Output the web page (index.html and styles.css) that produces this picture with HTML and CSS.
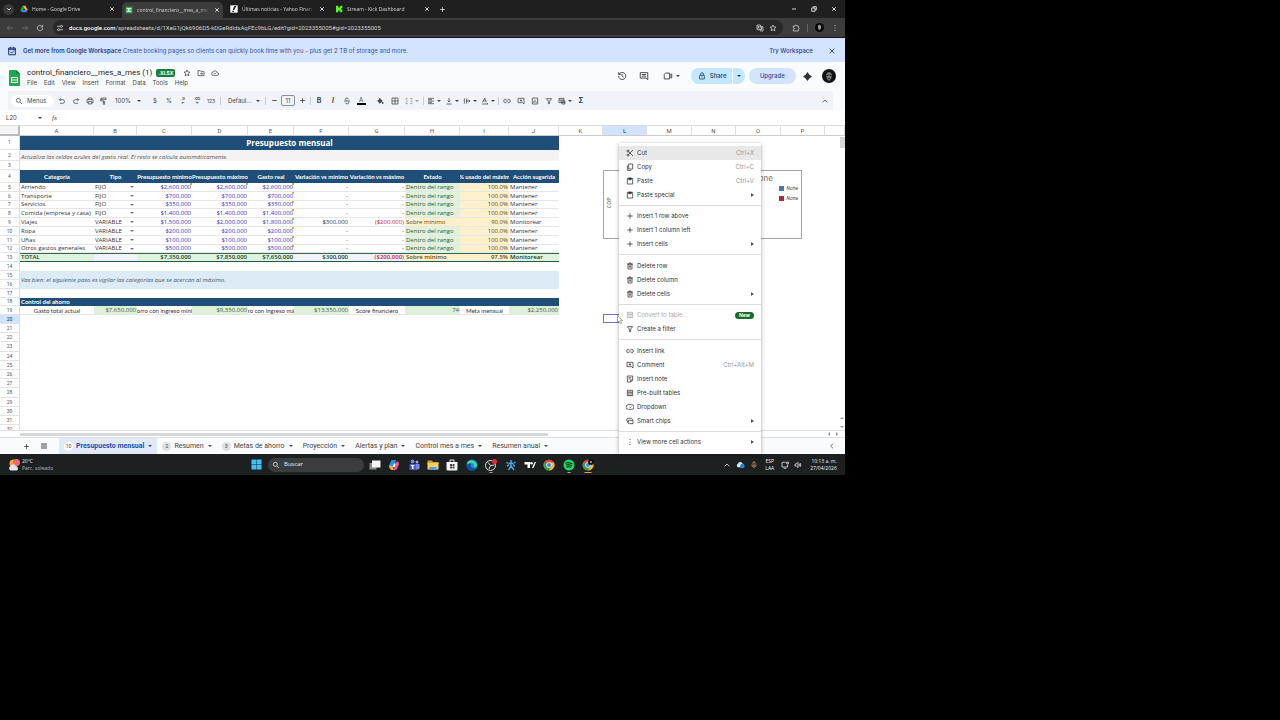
FILE: index.html
```html
<!DOCTYPE html>
<html lang="es">
<head>
    <meta charset="UTF-8">
    <meta name="viewport" content="width=device-width, initial-scale=1.0">
    <title>control_financiero__mes_a_mes (1)</title>
    <link rel="stylesheet" href="styles.css">
</head>
<body>

<!-- Icon set -->
<svg class="defs" aria-hidden="true">
    <symbol id="i-x" viewBox="0 0 24 24"><path d="M5 5l14 14M19 5L5 19"/></symbol>
    <symbol id="i-plus" viewBox="0 0 24 24"><path d="M12 4v16M4 12h16"/></symbol>
    <symbol id="i-minus" viewBox="0 0 24 24"><path d="M4 12h16"/></symbol>
    <symbol id="i-down" viewBox="0 0 24 24"><path d="M5 9l7 7 7-7"/></symbol>
    <symbol id="i-up" viewBox="0 0 24 24"><path d="M5 16l7-7 7 7"/></symbol>
    <symbol id="i-left" viewBox="0 0 24 24"><path d="M15 5l-7 7 7 7"/></symbol>
    <symbol id="i-back" viewBox="0 0 24 24"><path d="M21 12H4M11 5l-7 7 7 7"/></symbol>
    <symbol id="i-fwd" viewBox="0 0 24 24"><path d="M3 12h17M13 5l7 7-7 7"/></symbol>
    <symbol id="i-reload" viewBox="0 0 24 24"><path d="M20 12a8 8 0 1 1-3-6.200M20 3v6h-6"/></symbol>
    <symbol id="i-tune" viewBox="0 0 24 24"><path d="M3 7h9M19 7h2M12 17h9M3 17h2"/><circle cx="16" cy="7" r="3"/><circle cx="8" cy="17" r="3"/></symbol>
    <symbol id="i-star" viewBox="0 0 24 24"><path d="M12 3l2.700 6 6.300.6-4.800 4.300 1.500 6.600L12 17l-5.700 3.500 1.500-6.600L3 9.600l6.300-.6z"/></symbol>
    <symbol id="i-translate" viewBox="0 0 24 24"><path d="M3 3h10l4 14H3zM12 8h9v13h-8l-1-4M5 8h6M8 6v2c0 3-1 5-3 6M6 10l4 4M14 12h5M17 12c0 3-1 4-3 6"/></symbol>
    <symbol id="i-puzzle" viewBox="0 0 24 24"><path d="M4 6h5c0-4 5-4 5 0h5v5c3 0 3 5 0 5v5H4v-5c4 0 4-5 0-5z"/></symbol>
    <symbol id="i-more" viewBox="0 0 24 24"><path d="M12 3v3M12 10.500v3M12 18v3"/></symbol>
    <symbol id="i-cal" viewBox="0 0 24 24"><path d="M4 5h16v16H4zM4 8h16M8 2v4M16 2v4M8 14l3 3 6-6"/></symbol>
    <symbol id="i-folder" viewBox="0 0 24 24"><path d="M3 5h7l2 3h9v12H3zM9 14h8M14 11l3 3-3 3"/></symbol>
    <symbol id="i-cloud" viewBox="0 0 24 24"><path d="M7 19a5 5 0 0 1-.5-10 6.500 6.500 0 0 1 12 2A4 4 0 0 1 19 19zM9 13l2 2 4-4"/></symbol>
    <symbol id="i-history" viewBox="0 0 24 24"><path d="M4 12a8.500 8.500 0 1 0 3-6.500L4 8M4 3v5h5M12 7v5l4 3"/></symbol>
    <symbol id="i-chat" viewBox="0 0 24 24"><path d="M3 4h18v17l-4-4H3zM7 8.500h10M7 12.500h10"/></symbol>
    <symbol id="i-video" viewBox="0 0 24 24"><path d="M6 5h10v14H3V8zM16 11l5-4v10l-5-4"/></symbol>
    <symbol id="i-lock" viewBox="0 0 24 24"><path d="M5 10h14v11H5zM8 10V6a4 4 0 0 1 8 0v4M12 14v3"/></symbol>
    <symbol id="i-search" viewBox="0 0 24 24"><circle cx="10" cy="10" r="6"/><path d="M15 15l6 6"/></symbol>
    <symbol id="i-undo" viewBox="0 0 24 24"><path d="M8 4L4 8l4 4M4 8h10a5 5 0 0 1 0 11H6"/></symbol>
    <symbol id="i-redo" viewBox="0 0 24 24"><path d="M16 4l4 4-4 4M20 8H10a5 5 0 0 0 0 11h8"/></symbol>
    <symbol id="i-print" viewBox="0 0 24 24"><path d="M7 8V3h10v5M7 17H3V8h18v9h-4M7 14h10v7H7z"/></symbol>
    <symbol id="i-paint" viewBox="0 0 24 24"><path d="M5 3h13v5H5zM5 5H2v7h10v3M10 15h4v7h-4z"/></symbol>
    <symbol id="i-strike" viewBox="0 0 24 24"><path d="M3 12h18M17 7c-1-5-10-5-10 0 0 2 2 3 5 5M7 17c1 5 10 5 10 0 0-2-1-3-2-3"/></symbol>
    <symbol id="i-fill" viewBox="0 0 24 24"><path fill="currentColor" d="M5 12l7-7 7 7-7 7zM20 15l2 4h-4z"/><path d="M8 2l5 5"/></symbol>
    <symbol id="i-borders" viewBox="0 0 24 24"><path d="M3 3h18v18H3zM12 3v18M3 12h18"/></symbol>
    <symbol id="i-merge" viewBox="0 0 24 24"><path d="M9 4H3v5M3 15v5h6M15 4h6v5M21 15v5h-6M3 12h6M21 12h-6"/></symbol>
    <symbol id="i-align" viewBox="0 0 24 24"><path d="M3 4h18M3 8h12M3 12h18M3 16h12M3 20h18"/></symbol>
    <symbol id="i-valign" viewBox="0 0 24 24"><path d="M4 21h16M12 3v12M8 11l4 4 4-4"/></symbol>
    <symbol id="i-wrap" viewBox="0 0 24 24"><path d="M4 4v16M11 4v16M8 12h13M17 8l4 4-4 4"/></symbol>
    <symbol id="i-rotate" viewBox="0 0 24 24"><path d="M5 16l6-13 5 11M7 12h8M3 21h18M17 18l4 3"/></symbol>
    <symbol id="i-link" viewBox="0 0 24 24"><path d="M10 7H7a5 5 0 0 0 0 10h3M14 7h3a5 5 0 0 1 0 10h-3M8 12h8"/></symbol>
    <symbol id="i-addcomment" viewBox="0 0 24 24"><path d="M3 4h18v17l-4-4H3zM12 7v7M8.500 10.500h7"/></symbol>
    <symbol id="i-chart" viewBox="0 0 24 24"><path d="M4 3h16v18H4zM8 17v-5M12 17V8M16 17v-3"/></symbol>
    <symbol id="i-filter" viewBox="0 0 24 24"><path d="M4 5h16l-6 7v8h-4v-8z"/></symbol>
    <symbol id="i-table" viewBox="0 0 24 24"><path d="M4 4h16v16H4zM4 9h16M9 9v11M15 9v11"/></symbol>
    <symbol id="i-views" viewBox="0 0 24 24"><path d="M3 4h15v13H3zM3 9h15M9 9v8M12 12h9v9h-9zM12 16h9"/></symbol>
    <symbol id="i-menu" viewBox="0 0 24 24"><path d="M3 6h18M3 12h18M3 18h18"/></symbol>
    <symbol id="i-cut" viewBox="0 0 24 24"><circle cx="6" cy="6" r="3"/><circle cx="6" cy="18" r="3"/><path d="M8 8l13 13M8 16L21 3"/></symbol>
    <symbol id="i-copy" viewBox="0 0 24 24"><path d="M8 3h12v15H8zM4 7v15h12"/></symbol>
    <symbol id="i-paste" viewBox="0 0 24 24"><path d="M4 4h16v17H4z"/><path fill="currentColor" d="M8 3h8v5H8z"/></symbol>
    <symbol id="i-trash" viewBox="0 0 24 24"><path d="M6 6h12v15H6zM3 6h18M9 3h6M10 10v7M14 10v7"/></symbol>
    <symbol id="i-note" viewBox="0 0 24 24"><path d="M4 3h16v12l-6 6H4zM14 21v-6h6M8 8h8M8 12h6"/></symbol>
    <symbol id="i-dropdown" viewBox="0 0 24 24"><path d="M7 5h10a7 7 0 0 1 0 14H7A7 7 0 0 1 7 5zM10 11l3 3 3-3"/></symbol>
    <symbol id="i-chips" viewBox="0 0 24 24"><path d="M9 14H7A5 5 0 0 1 7 4h9a5 5 0 0 1 4 4M10 10h11v10H10a5 5 0 0 1 0-10z"/></symbol>
    <symbol id="i-mic" viewBox="0 0 24 24"><path d="M9 3h6v11H9zM5 11a7 7 0 0 0 14 0M12 18v4"/></symbol>
    <symbol id="i-monitor" viewBox="0 0 24 24"><path d="M14 4H3v14h17v-6M8 22h8M17 3h5v6h-5z"/></symbol>
    <symbol id="i-sound" viewBox="0 0 24 24"><path d="M3 9v6h4l5 5V4L7 9zM15 9q3 3 0 6M18 6q5 6 0 12"/></symbol>
</svg>

<div class="screen">

    <!-- Browser tabs -->
    <div class="tab-strip">
        <button class="tab-search" aria-label="Search tabs"><svg class="icon xs"><use href="#i-down"/></svg></button>
        <div class="tab">
            <svg class="favicon" viewBox="0 0 24 24"><path fill="#f9bc15" d="M8 2h8l7 13h-7z"/><path fill="#1fa463" d="M8 2l4 7-7 13-4-7z"/><path fill="#4285f4" d="M9 15h14l-4 7H5z"/></svg>
            <span class="tab-title">Home - Google Drive</span>
            <svg class="icon xs"><use href="#i-x"/></svg>
        </div>
        <div class="tab active">
            <svg class="favicon" viewBox="0 0 24 24"><path fill="#34a853" d="M2 2h20v20H2z"/><path fill="#fff" d="M5 7h14v3H5zM5 14h14v3H5zM10 7h3v10h-3z"/></svg>
            <span class="tab-title">control_financiero__mes_a_me</span>
            <svg class="icon xs"><use href="#i-x"/></svg>
        </div>
        <div class="tab">
            <svg class="favicon" viewBox="0 0 24 24"><path fill="#fff" d="M1 1h22v22H1z"/><path fill="#222" d="M13 3h6l-6 12H8zM7 17h5v4H7z"/></svg>
            <span class="tab-title">Últimas noticias - Yahoo Finan</span>
            <svg class="icon xs"><use href="#i-x"/></svg>
        </div>
        <div class="tab">
            <svg class="favicon" viewBox="0 0 24 24"><path fill="#53fc18" d="M3 2h7v6h3V5h3V2h6v7h-3v5h3v8h-6v-3h-3v-3h-3v6H3z"/></svg>
            <span class="tab-title">Stream - Kick Dashboard</span>
            <svg class="icon xs"><use href="#i-x"/></svg>
        </div>
        <button class="new-tab" aria-label="New tab"><svg class="icon sm"><use href="#i-plus"/></svg></button>
        <div class="window-buttons">
            <svg class="icon xs"><use href="#i-minus"/></svg>
            <svg class="icon xs" viewBox="0 0 24 24"><path d="M3 8h13v13H3zM8 8V3h13v13h-5"/></svg>
            <svg class="icon xs"><use href="#i-x"/></svg>
        </div>
    </div>

    <!-- Address bar -->
    <div class="address-bar">
        <div class="nav-buttons">
            <svg class="icon dim"><use href="#i-back"/></svg>
            <svg class="icon dim"><use href="#i-fwd"/></svg>
            <svg class="icon"><use href="#i-reload"/></svg>
        </div>
        <div class="url-box">
            <svg class="icon"><use href="#i-tune"/></svg>
            <span class="url"><b>docs.google.com</b>/spreadsheets/d/1XeG1jQk6906D5-kDGeRdldsAqFEc9bLG/edit?gid=2023355005#gid=2023355005</span>
            <svg class="icon"><use href="#i-translate"/></svg>
            <svg class="icon"><use href="#i-star"/></svg>
        </div>
        <div class="browser-actions">
            <svg class="icon"><use href="#i-puzzle"/></svg>
            <span class="bar-sep"></span>
            <svg class="avatar small" viewBox="0 0 24 24"><circle cx="12" cy="12" r="12" fill="#080808"/><path fill="#999" d="M8 7q4-5 8 0v6l-2 5h-4l-2-5z"/></svg>
            <svg class="icon"><use href="#i-more"/></svg>
        </div>
    </div>

    <!-- Workspace banner -->
    <div class="banner">
        <svg class="icon lg"><use href="#i-cal"/></svg>
        <p><b>Get more from Google Workspace</b> Create booking pages so clients can quickly book time with you - plus get 2 TB of storage and more.</p>
        <a href="#">Try Workspace</a>
        <svg class="icon"><use href="#i-x"/></svg>
    </div>

    <!-- Document header -->
    <header class="doc-header">
        <svg class="sheets-logo" viewBox="0 0 22 32"><path fill="#1fa84f" d="M2 0h13l7 8v22q0 2-2 2H2q-2 0-2-2V2q0-2 2-2z"/><path fill="#0d7c37" d="M15 0l7 8h-7z"/><path fill="#fff" d="M4 14h14v12H4z"/><path fill="#1fa84f" d="M6 16h10v3H6zM6 21h10v3H6z"/></svg>
        <div class="doc-info">
            <div class="doc-title">
                <h1>control_financiero__mes_a_mes (1)</h1>
                <span class="xlsx">.XLSX</span>
                <svg class="icon"><use href="#i-star"/></svg>
                <svg class="icon"><use href="#i-folder"/></svg>
                <svg class="icon"><use href="#i-cloud"/></svg>
            </div>
            <nav class="doc-menu">
                <a href="#">File</a><a href="#">Edit</a><a href="#">View</a><a href="#">Insert</a><a href="#">Format</a><a href="#">Data</a><a href="#">Tools</a><a href="#">Help</a>
            </nav>
        </div>
        <div class="doc-actions">
            <svg class="icon lg"><use href="#i-history"/></svg>
            <svg class="icon lg"><use href="#i-chat"/></svg>
            <span class="meet"><svg class="icon lg"><use href="#i-video"/></svg><i class="caret"></i></span>
            <div class="share">
                <button class="share-main"><svg class="icon"><use href="#i-lock"/></svg>Share</button>
                <button class="share-more" aria-label="Share options"><i class="caret"></i></button>
            </div>
            <button class="upgrade">Upgrade</button>
            <svg class="spark" viewBox="0 0 24 24"><path d="M12 0q4 8 12 12-8 4-12 12-4-8-12-12 8-4 12-12z"/></svg>
            <svg class="avatar" viewBox="0 0 24 24"><circle cx="12" cy="12" r="12" fill="#111"/><path fill="#777" d="M7 9q5-8 10 0l-1 7-4 5-4-5z"/><path fill="#222" d="M8 10h3v2H8zM13 10h3v2h-3zM10 16h4v1h-4z"/></svg>
        </div>
    </header>

    <!-- Toolbar -->
    <div class="toolbar">
        <label class="menus"><svg class="icon"><use href="#i-search"/></svg><input type="text" placeholder="Menus" aria-label="Menus"></label>
        <button aria-label="Undo"><svg class="icon"><use href="#i-undo"/></svg></button>
        <button aria-label="Redo"><svg class="icon"><use href="#i-redo"/></svg></button>
        <button aria-label="Print"><svg class="icon"><use href="#i-print"/></svg></button>
        <button aria-label="Paint format"><svg class="icon"><use href="#i-paint"/></svg></button>
        <label class="drop zoom"><select aria-label="Zoom"><option>100%</option></select><i class="caret"></i></label>
        <button>$</button>
        <button>%</button>
        <button class="dec">.0<br>←</button>
        <button class="dec">.00<br>→</button>
        <button class="digits">123</button>
        <span class="tool-sep after-format"></span>
        <label class="drop font"><select aria-label="Font"><option>Defaul...</option></select><i class="caret"></i></label>
        <span class="tool-sep"></span>
        <button aria-label="Decrease font size"><svg class="icon sm"><use href="#i-minus"/></svg></button>
        <input class="font-size" type="text" value="11" aria-label="Font size">
        <button aria-label="Increase font size"><svg class="icon sm"><use href="#i-plus"/></svg></button>
        <span class="tool-sep"></span>
        <button class="letter"><b>B</b></button>
        <button class="letter"><b><em>I</em></b></button>
        <button aria-label="Strikethrough"><svg class="icon"><use href="#i-strike"/></svg></button>
        <button><span class="text-color">A</span></button>
        <button class="fill" aria-label="Fill color"><svg class="icon"><use href="#i-fill"/></svg></button>
        <button aria-label="Borders"><svg class="icon"><use href="#i-borders"/></svg></button>
        <button class="with-caret faded" aria-label="Merge cells"><svg class="icon"><use href="#i-merge"/></svg><i class="caret"></i></button>
        <span class="tool-sep"></span>
        <button class="with-caret" aria-label="Horizontal align"><svg class="icon"><use href="#i-align"/></svg><i class="caret"></i></button>
        <button class="with-caret" aria-label="Vertical align"><svg class="icon"><use href="#i-valign"/></svg><i class="caret"></i></button>
        <button class="with-caret" aria-label="Text wrapping"><svg class="icon"><use href="#i-wrap"/></svg><i class="caret"></i></button>
        <button class="with-caret" aria-label="Text rotation"><svg class="icon"><use href="#i-rotate"/></svg><i class="caret"></i></button>
        <span class="tool-sep"></span>
        <button aria-label="Insert link"><svg class="icon"><use href="#i-link"/></svg></button>
        <button aria-label="Insert comment"><svg class="icon"><use href="#i-addcomment"/></svg></button>
        <button aria-label="Insert chart"><svg class="icon"><use href="#i-chart"/></svg></button>
        <button aria-label="Create a filter"><svg class="icon"><use href="#i-filter"/></svg></button>
        <button class="with-caret" aria-label="Table views"><svg class="icon"><use href="#i-views"/></svg><i class="caret"></i></button>
        <button class="letter"><b>Σ</b></button>
        <button class="collapse" aria-label="Hide the menus"><svg class="icon"><use href="#i-up"/></svg></button>
    </div>

    <!-- Formula bar -->
    <div class="formula-bar">
        <input class="name-box" type="text" value="L20" aria-label="Name box"><i class="caret"></i>
        <em class="fx">fx</em>
        <input class="formula" type="text" aria-label="Formula">
    </div>

    <!-- Sheet -->
    <main class="sheet">
        <table class="grid">
            <colgroup>
                <col class="c-num"><col class="c-a"><col class="c-b"><col class="c-c"><col class="c-d"><col class="c-e"><col class="c-c"><col class="c-d"><col class="c-c"><col class="c-i"><col class="c-j"><col class="c-k"><col class="c-k"><col class="c-m"><col class="c-k"><col class="c-m"><col class="c-k"><col>
            </colgroup>
            <thead>
                <tr><th class="corner"></th><th>A</th><th>B</th><th>C</th><th>D</th><th>E</th><th>F</th><th>G</th><th>H</th><th>I</th><th>J</th><th>K</th><th class="sel">L</th><th>M</th><th>N</th><th>O</th><th>P</th><th></th></tr>
            </thead>
            <tbody>
                <tr class="title-row"><th>1</th><td colspan="10">Presupuesto mensual</td></tr>
                <tr class="note-row"><th>2</th><td colspan="10">Actualiza las celdas azules del gasto real. El resto se calcula automáticamente.</td></tr>
                <tr><th>3</th></tr>
                <tr class="head-row"><th>4</th><td><div>Categoría</div></td><td><div>Tipo</div></td><td><div>Presupuesto mínimo</div></td><td><div>Presupuesto máximo</div></td><td><div>Gasto real</div></td><td><div>Variación vs mínimo</div></td><td><div>Variación vs máximo</div></td><td><div>Estado</div></td><td><div>% usado del máxim</div></td><td><div>Acción sugerida</div></td></tr>
                <tr class="item"><th>5</th><td>Arriendo</td><td>FIJO<i class="caret"></i></td><td class="money tick">$2,600,000</td><td class="money tick">$2,600,000</td><td class="money tick">$2,600,000</td><td class="num">-</td><td class="num">-</td><td class="ok">Dentro del rango</td><td class="used">100.0%</td><td>Mantener</td></tr>
                <tr class="item"><th>6</th><td>Transporte</td><td>FIJO<i class="caret"></i></td><td class="money">$700,000</td><td class="money">$700,000</td><td class="money tick">$700,000</td><td class="num">-</td><td class="num">-</td><td class="ok">Dentro del rango</td><td class="used">100.0%</td><td>Mantener</td></tr>
                <tr class="item tight"><th>7</th><td>Servicios</td><td>FIJO<i class="caret"></i></td><td class="money">$350,000</td><td class="money">$350,000</td><td class="money tick">$350,000</td><td class="num">-</td><td class="num">-</td><td class="ok">Dentro del rango</td><td class="used">100.0%</td><td>Mantener</td></tr>
                <tr class="item"><th>8</th><td>Comida (empresa y casa)</td><td>FIJO<i class="caret"></i></td><td class="money">$1,400,000</td><td class="money">$1,400,000</td><td class="money tick">$1,400,000</td><td class="num">-</td><td class="num">-</td><td class="ok">Dentro del rango</td><td class="used">100.0%</td><td>Mantener</td></tr>
                <tr class="item"><th>9</th><td>Viajes</td><td>VARIABLE<i class="caret"></i></td><td class="money">$1,500,000</td><td class="money">$2,000,000</td><td class="money tick">$1,800,000</td><td class="num">$300,000</td><td class="num neg">($200,000)</td><td class="warn">Sobre mínimo</td><td class="used">90.0%</td><td>Monitorear</td></tr>
                <tr class="item"><th>10</th><td>Ropa</td><td>VARIABLE<i class="caret"></i></td><td class="money">$200,000</td><td class="money">$200,000</td><td class="money tick">$200,000</td><td class="num">-</td><td class="num">-</td><td class="ok">Dentro del rango</td><td class="used">100.0%</td><td>Mantener</td></tr>
                <tr class="item"><th>11</th><td>Uñas</td><td>VARIABLE<i class="caret"></i></td><td class="money">$100,000</td><td class="money">$100,000</td><td class="money tick">$100,000</td><td class="num">-</td><td class="num">-</td><td class="ok">Dentro del rango</td><td class="used">100.0%</td><td>Mantener</td></tr>
                <tr class="item tight"><th>12</th><td>Otros gastos generales</td><td>VARIABLE<i class="caret"></i></td><td class="money">$500,000</td><td class="money">$500,000</td><td class="money tick">$500,000</td><td class="num">-</td><td class="num">-</td><td class="ok">Dentro del rango</td><td class="used">100.0%</td><td>Mantener</td></tr>
                <tr class="total"><th>13</th><td>TOTAL</td><td class="plain"></td><td class="num">$7,350,000</td><td class="num">$7,850,000</td><td class="num">$7,650,000</td><td class="num plain">$300,000</td><td class="num plain neg">($200,000)</td><td class="warn">Sobre mínimo</td><td class="used">97.5%</td><td>Monitorear</td></tr>
                <tr><th>14</th></tr>
                <tr><th>15</th><td class="advice" colspan="10" rowspan="2">Vas bien: el siguiente paso es vigilar las categorías que se acercan al máximo.</td></tr>
                <tr><th>16</th></tr>
                <tr><th>17</th></tr>
                <tr class="section tight"><th>18</th><td colspan="10">Control del ahorro</td></tr>
                <tr class="savings"><th>19</th><td><div>Gasto total actual</div></td><td class="good">$7,650,000</td><td><div>orro con ingreso míni</div></td><td class="good">$9,350,000</td><td><div>ro con ingreso má</div></td><td class="good">$13,350,000</td><td><div>Score financiero</div></td><td class="good">74</td><td><div>Meta mensual</div></td><td class="good">$2,250,000</td></tr>
                <tr><th class="sel">20</th></tr>
                <tr><th>21</th></tr>
                <tr><th>22</th></tr>
                <tr class="loose"><th>23</th></tr>
                <tr><th>24</th></tr>
                <tr><th>25</th></tr>
                <tr><th>26</th></tr>
                <tr><th>27</th></tr>
                <tr class="loose"><th>28</th></tr>
                <tr><th>29</th></tr>
                <tr><th>30</th></tr>
                <tr><th>31</th></tr>
                <tr><th>32</th></tr>
            </tbody>
        </table>
        <span class="v-thumb"></span>
        <span class="v-arrows"><i></i><i></i></span>

        <div class="chart">
            <span class="chart-title">None</span>
            <span class="axis">COP</span>
            <ul class="legend">
                <li><i class="blue"></i>None</li>
                <li><i class="red"></i>None</li>
            </ul>
        </div>
        <span class="cell-cursor"></span>
    </main>

    <div class="h-scroll"><span class="h-thumb"></span><span class="h-arrows"><i></i><i></i></span></div>

    <!-- Sheet tabs -->
    <div class="sheet-tabs">
        <button class="add-sheet" aria-label="Add sheet"><svg class="icon sm"><use href="#i-plus"/></svg></button>
        <button class="all-sheets" aria-label="All sheets"><svg class="icon"><use href="#i-menu"/></svg></button>
        <button class="sheet-tab current"><span class="count">10</span>Presupuesto mensual<i class="caret"></i></button>
        <button class="sheet-tab"><span class="count">2</span>Resumen<i class="caret"></i></button>
        <button class="sheet-tab"><span class="count">3</span>Metas de ahorro<i class="caret"></i></button>
        <button class="sheet-tab">Proyección<i class="caret"></i></button>
        <button class="sheet-tab">Alertas y plan<i class="caret"></i></button>
        <button class="sheet-tab">Control mes a mes<i class="caret"></i></button>
        <button class="sheet-tab">Resumen anual<i class="caret"></i></button>
        <svg class="icon side-toggle"><use href="#i-left"/></svg>
    </div>

    <!-- Windows taskbar -->
    <footer class="taskbar">
        <div class="weather">
            <svg viewBox="0 0 24 24"><circle cx="11" cy="9" r="8" fill="#f3a33b"/><circle cx="17" cy="7" r="7" fill="#ec6a6a"/><path fill="#dfe5f2" d="M5 23a5 5 0 0 1 0-9 6 6 0 0 1 11 0 5 5 0 0 1 2 9z"/></svg>
            <p>20°C<br><span>Parc. soleado</span></p>
        </div>
        <svg class="start" viewBox="0 0 24 24"><path fill="#3fc1f5" d="M1 1h10.500v10.500H1zM12.500 1H23v10.500H12.500zM1 12.500h10.500V23H1zM12.500 12.500H23V23H12.500z"/></svg>
        <label class="task-search"><svg class="icon"><use href="#i-search"/></svg><input type="text" placeholder="Buscar" aria-label="Buscar"></label>
        <div class="apps">
            <svg viewBox="0 0 24 24"><path fill="#8a8a8a" d="M1 8h14v13H1z"/><path fill="#f4f4f4" d="M6 3h17v14H6z"/></svg>
            <svg viewBox="0 0 24 24"><path fill="#2b8fe8" d="M7 2h9l-5 17H5q-4-1-3-6z"/><path fill="#f0b429" d="M2 13q3 0 6 1l4 8H8q-4 0-6-9z"/><path fill="#e7568c" d="M17 5h2q4 1 3 6l-4 9q-2 3-8 2l3-7z"/><path fill="#fff" d="M12 9h4l-3 7H9z"/></svg>
            <svg viewBox="0 0 24 24"><circle cx="9" cy="5" r="4" fill="#7b83eb"/><circle cx="18" cy="6" r="3" fill="#9ea2f5"/><path fill="#4e5bd0" d="M3 10h13v12H3z"/><path fill="#7b83eb" d="M16 10h7v9q-3 3-7 2z"/><path fill="#fff" d="M6 12h7v2h-2v6H8v-6H6z"/></svg>
            <svg viewBox="0 0 24 24"><path fill="#dc9b20" d="M1 3h9l2 3h11v4H1z"/><path fill="#fbd256" d="M1 8h22v13H1z"/><path fill="#4ba0e8" d="M5 16h14v6H5z"/></svg>
            <svg viewBox="0 0 24 24"><path fill="#f5f5f5" d="M1 6h22v14q0 3-3 3H4q-3 0-3-3z"/><path d="M8 6V2h8v4" fill="none" stroke="#eee" stroke-width="2"/><path fill="#444" d="M8 10h4v4H8zM13 10h4v4h-4zM8 15h4v4H8zM13 15h4v4h-4z"/></svg>
            <svg viewBox="0 0 24 24"><circle cx="12" cy="12" r="11" fill="#1687d9"/><path fill="#48d5a0" d="M3 6q9-9 19 4 1 7-7 6 3-8-4-8-6 0-9 4z"/><path fill="#0b4ea5" d="M1 13q3-5 9-4-4 9 9 10-7 7-14 1z"/></svg>
            <svg class="running" viewBox="0 0 24 24"><circle cx="11" cy="13" r="10" fill="#222" stroke="#ddd" stroke-width="2"/><path d="M11 13L6 7M11 13l8-1M11 13l-3 7" stroke="#ddd" stroke-width="2"/><circle cx="19" cy="5" r="5" fill="#e0283c"/><path fill="#aaa" d="M9 26h6v2H9z"/></svg>
            <svg viewBox="0 0 24 24"><path d="M12 2v6M7 10l5-3 5 3M12 8v6l-5 8M12 14l6 8M4 14l4-2M20 14l-4-2M3 7l3 1M21 6l-3 2" fill="none" stroke="#4aa3e8" stroke-width="3"/></svg>
            <svg viewBox="0 0 24 24"><path fill="#fff" d="M1 6h11v12H7v-7H1zM16 18l5-12h3l-5 12z"/><circle cx="15" cy="8.500" r="2.500" fill="#fff"/></svg>
            <svg viewBox="0 0 24 24"><circle cx="12" cy="12" r="11" fill="#e94435"/><path fill="#34a353" d="M12 12L2.500 6.500A11 11 0 0 0 12 23l5-8z"/><path fill="#fbc116" d="M12 7h9.800A11 11 0 0 1 12 23l5-8z"/><circle cx="12" cy="12" r="5" fill="#4285f4" stroke="#fff" stroke-width="1.500"/></svg>
            <svg class="running" viewBox="0 0 24 24"><circle cx="12" cy="12" r="11" fill="#1ed760"/><path d="M5 8q8-2 14 2M6 12q7-2 12 2M7 16q5-2 9 1" fill="none" stroke="#111" stroke-width="2"/><path fill="#aaa" d="M9 26h6v2H9z"/></svg>
            <svg class="running" viewBox="0 0 24 24"><circle cx="12" cy="12" r="11" fill="#e94435"/><path fill="#34a353" d="M12 12L2.500 6.500A11 11 0 0 0 12 23l5-8z"/><path fill="#fbc116" d="M12 7h9.800A11 11 0 0 1 12 23l5-8z"/><circle cx="12" cy="12" r="5" fill="#4285f4" stroke="#fff" stroke-width="1.500"/><circle cx="18" cy="6" r="6" fill="#111"/><circle cx="18" cy="6" r="2" fill="#aaa"/><path fill="#d9a06a" d="M5 26h14v2H5z"/></svg>
        </div>
        <div class="tray">
            <svg class="icon"><use href="#i-up"/></svg>
            <svg class="onedrive" viewBox="0 0 24 24"><path fill="#dce9f7" d="M5 19a5 5 0 0 1 0-9 7 7 0 0 1 13 0v9z"/><circle cx="17" cy="16" r="6" fill="#2185d8"/></svg>
            <svg class="icon mic"><use href="#i-mic"/></svg>
            <p class="lang">ESP<br>LAA</p>
            <svg class="icon"><use href="#i-monitor"/></svg>
            <svg class="icon"><use href="#i-sound"/></svg>
            <p class="clock">10:13 a. m.<br>27/04/2026</p>
        </div>
    </footer>

    <!-- Right-click menu -->
    <div class="context-menu">
        <button class="hover"><svg class="icon"><use href="#i-cut"/></svg>Cut<kbd>Ctrl+X</kbd></button>
        <button><svg class="icon"><use href="#i-copy"/></svg>Copy<kbd>Ctrl+C</kbd></button>
        <button><svg class="icon"><use href="#i-paste"/></svg>Paste<kbd>Ctrl+V</kbd></button>
        <button><svg class="icon"><use href="#i-paste"/></svg>Paste special<i class="arrow"></i></button>
        <hr>
        <button><svg class="icon"><use href="#i-plus"/></svg>Insert 1 row above</button>
        <button><svg class="icon"><use href="#i-plus"/></svg>Insert 1 column left</button>
        <button><svg class="icon"><use href="#i-plus"/></svg>Insert cells<i class="arrow"></i></button>
        <hr>
        <button><svg class="icon"><use href="#i-trash"/></svg>Delete row</button>
        <button><svg class="icon"><use href="#i-trash"/></svg>Delete column</button>
        <button><svg class="icon"><use href="#i-trash"/></svg>Delete cells<i class="arrow"></i></button>
        <hr>
        <button disabled><svg class="icon"><use href="#i-table"/></svg>Convert to table...<span class="new">New</span></button>
        <button><svg class="icon"><use href="#i-filter"/></svg>Create a filter</button>
        <hr>
        <button><svg class="icon"><use href="#i-link"/></svg>Insert link</button>
        <button><svg class="icon"><use href="#i-addcomment"/></svg>Comment<kbd>Ctrl+Alt+M</kbd></button>
        <button><svg class="icon"><use href="#i-note"/></svg>Insert note</button>
        <button><svg class="icon"><use href="#i-table"/></svg>Pre-built tables</button>
        <button><svg class="icon"><use href="#i-dropdown"/></svg>Dropdown</button>
        <button><svg class="icon"><use href="#i-chips"/></svg>Smart chips<i class="arrow"></i></button>
        <hr>
        <button><svg class="icon"><use href="#i-more"/></svg>View more cell actions<i class="arrow"></i></button>
    </div>
    <svg class="pointer" viewBox="0 0 12 18"><path fill="#fff" stroke="#555" d="M1 1v14l3-3 2 5 3-1-2-5h4z"/></svg>

</div>

</body>
</html>
```
FILE: styles.css
```css
* {
    box-sizing: border-box;
}
body {
    margin: 0;
    background: #000;
    font-family: Inter, Roboto, sans-serif;
    font-size: 6px;
    line-height: 8px;
    color: #444746;
}
button, input, select {
    font: inherit;
    color: inherit;
    border: none;
    background: none;
    padding: 0;
    margin: 0;
    appearance: none;
    min-width: 0;
}
a {
    color: inherit;
    text-decoration: none;
}
p, h1, ul {
    margin: 0;
    padding: 0;
}
.defs {
    display: none;
}
.screen {
    position: relative;
    width: 66%;
    background: #fff;
    overflow: hidden;
}

/* Icons */
.icon {
    width: 8px;
    height: 8px;
    flex: none;
    fill: none;
    stroke: currentColor;
    stroke-width: 2.3;
}
.icon.xs {
    width: 6px;
    height: 6px;
    stroke-width: 4;
}
.icon.sm {
    width: 7px;
    height: 7px;
    stroke-width: 3;
}
.icon.lg {
    width: 10px;
    height: 10px;
}
.caret {
    flex: none;
    border: 2px solid transparent;
    border-top-color: currentColor;
    border-bottom: none;
}

/* Browser tabs */
.tab-strip {
    display: flex;
    align-items: center;
    height: 18px;
    background: #1f1f1f;
    color: #d5d5d5;
    font-family: "Open Sans", sans-serif;
    font-size: 5px;
}
.tab-search {
    display: flex;
    align-items: center;
    justify-content: center;
    width: 11px;
    height: 11px;
    margin: 0 3px;
    border-radius: 50%;
    background: #393939;
}
.tab {
    display: flex;
    align-items: center;
    width: 105px;
    height: 15px;
    padding: 0 7px 0 3px;
    gap: 4px;
}
.tab.active {
    background: #3c3c3c;
    border-radius: 5px 5px 0 0;
    height: 16px;
    align-self: flex-end;
    width: 101px;
    margin-right: 4px;
    padding-right: 3px;
}
.favicon {
    width: 8px;
    height: 8px;
    flex: none;
}
.tab-title {
    flex: 1;
    overflow: hidden;
    white-space: nowrap;
    mask-image: linear-gradient(to right, #000 85%, transparent);
}
.new-tab {
    display: flex;
    margin-left: 2px;
}
.window-buttons {
    display: flex;
    gap: 14px;
    margin-left: auto;
    padding-right: 8px;
}

/* Address bar */
.address-bar {
    display: flex;
    align-items: center;
    height: 20px;
    background: #3c3c3c;
    border-bottom: 1px solid #141414;
    color: #d5d5d5;
    font-family: Roboto, sans-serif;
}
.nav-buttons {
    display: flex;
    gap: 7px;
    padding: 0 6px;
}
.dim {
    color: #777;
}
.url-box {
    display: flex;
    align-items: center;
    flex: 1;
    gap: 5px;
    height: 15px;
    margin-left: 3px;
    padding: 0 6px 0 3px;
    border-radius: 8px;
    background: #282828;
}
.url {
    flex: 1;
    white-space: nowrap;
}
.url b {
    font-weight: 500;
    color: #fff;
}
.browser-actions {
    display: flex;
    align-items: center;
    gap: 7px;
    padding: 0 6px 0 9px;
}
.bar-sep {
    width: 1px;
    height: 8px;
    background: #666;
}
.avatar {
    width: 14px;
    height: 14px;
}
.avatar.small {
    width: 9px;
    height: 9px;
}

/* Banner */
.banner {
    display: flex;
    align-items: center;
    height: 24px;
    padding: 1px 9px 0 7px;
    background: #d3e3fd;
    color: #33529a;
}
.banner .icon {
    color: #0b2a6b;
}
.banner p {
    flex: 1;
    margin-left: 6px;
}
.banner b, .banner a {
    font-weight: 500;
    color: #1c3f91;
}
.banner b {
    font-weight: 600;
}
.banner a {
    margin-right: 15px;
}

/* Document header */
.doc-header {
    display: flex;
    height: 29px;
    padding: 5px 9px 0;
    background: #f9fbfd;
}
.sheets-logo {
    width: 11px;
    height: 16px;
    margin: 3px 7px 0 0;
}
.doc-title {
    display: flex;
    align-items: center;
    gap: 6px;
    height: 12px;
}
.doc-title h1 {
    font-family: Roboto, sans-serif;
    font-size: 8px;
    font-weight: 400;
    line-height: 12px;
    color: #1f1f1f;
}
.xlsx {
    padding: 0 2px;
    margin: 0 2px 0 -2px;
    border-radius: 2px;
    background: #188038;
    color: #fff;
    font-size: 5px;
    font-weight: 700;
}
.doc-menu {
    display: flex;
    gap: 7px;
}
.doc-actions {
    display: flex;
    align-items: center;
    height: 18px;
    margin-left: auto;
}
.doc-actions > .icon {
    margin-right: 12px;
}
.meet {
    display: flex;
    align-items: center;
    gap: 3px;
    margin: 0 11px 0 2px;
}
.share {
    display: flex;
    height: 16px;
    margin-right: 4px;
    border-radius: 8px;
    background: #c2e7ff;
    color: #12445f;
    overflow: hidden;
}
.share-main {
    display: flex;
    align-items: center;
    gap: 4px;
    width: 41px;
    padding-left: 7px;
    font-weight: 500;
}
.share-more {
    display: flex;
    align-items: center;
    justify-content: center;
    width: 13px;
    border-left: 1px solid #f9fbfd;
}
.upgrade {
    width: 47px;
    height: 16px;
    margin-right: 7px;
    border-radius: 8px;
    background: #d3e3fd;
    color: #2b4b9a;
    font-weight: 500;
}
.spark {
    width: 9px;
    height: 9px;
    margin-right: 10px;
    fill: #333;
}

/* Toolbar */
.toolbar {
    display: flex;
    align-items: center;
    height: 19px;
    padding: 0 13px 0 11px;
    background: linear-gradient(#f0f4f9, #f0f4f9) no-repeat 8px 0 / calc(100% - 20px) 100% #f9fbfd;
}
.toolbar button {
    display: flex;
    align-items: center;
    justify-content: center;
    flex: none;
    width: 14px;
    height: 14px;
}
.toolbar .dec {
    display: block;
    font-size: 4px;
    font-weight: 600;
    line-height: 4px;
    text-align: center;
}
.toolbar .digits {
    font-size: 5px;
}
.toolbar .letter {
    font-size: 7px;
}
.toolbar .with-caret {
    width: 18px;
    gap: 2px;
}
.toolbar .faded {
    color: #999;
    width: 20px;
}
.toolbar .fill {
    margin: 0 1px 0 5px;
}
.toolbar .collapse {
    margin-left: auto;
}
.menus {
    display: flex;
    align-items: center;
    gap: 4px;
    width: 43px;
    height: 12px;
    margin-right: 1px;
    padding-left: 4px;
    border-radius: 6px;
    background: #fff;
}
.menus input {
    width: 24px;
}
.menus input::placeholder, .task-search input::placeholder {
    color: inherit;
    opacity: 1;
}
.drop {
    display: flex;
    align-items: center;
    justify-content: space-between;
    padding: 0 7px 0 4px;
}
.drop.zoom {
    width: 37px;
}
.drop.font {
    width: 42px;
    padding: 0 4px 0 6px;
}
.tool-sep {
    width: 1px;
    height: 8px;
    margin: 0 1px;
    background: #c7cacf;
}
.tool-sep.after-format {
    margin-left: 2px;
}
.font-size {
    width: 14px;
    height: 11px;
    border: 1px solid #8a8d91;
    border-radius: 2px;
    text-align: center;
}
.text-color {
    width: 9px;
    border-bottom: 2px solid #000;
    line-height: 7px;
}

/* Formula bar */
.formula-bar {
    display: flex;
    align-items: center;
    height: 15px;
    color: #444;
}
.name-box {
    width: 32px;
    margin-left: 6px;
}
.fx {
    margin-left: 10px;
    font-family: "Liberation Serif", serif;
    font-size: 7px;
}
.formula {
    flex: 1;
    margin-left: 6px;
}

/* Grid */
.sheet {
    position: relative;
    height: 306px;
    overflow: hidden;
    border-bottom: 1px solid #ddd;
}
.grid {
    width: 100%;
    table-layout: fixed;
    border-spacing: 0;
    font-family: "Open Sans", "Noto Sans", sans-serif;
    font-size: 6px;
    line-height: 7px;
    color: #333;
}
.c-num { width: 20px; }
.c-a { width: 74px; }
.c-b { width: 43px; }
.c-c { width: 55px; }
.c-d { width: 56px; }
.c-e { width: 46px; }
.c-i { width: 49px; }
.c-j { width: 50px; }
.c-k { width: 44px; }
.c-m { width: 45px; }
.grid th {
    padding: 0;
    border-right: 1px solid #ddd;
    border-bottom: 1px solid #e3e3e3;
    font-family: Roboto, sans-serif;
    font-size: 5px;
    font-weight: 400;
    text-align: center;
    color: #555;
}
.grid thead th {
    height: 11px;
    border-top: 1px solid #ddd;
    border-bottom-color: #ccc;
    font-size: 6px;
}
.grid thead .corner {
    background: #f3f4f5;
    border-right: 2px solid #bbb;
    border-bottom: 2px solid #bbb;
}
.grid .sel {
    background: #d3e3fd;
    color: #0b2a6b;
}
.grid tbody tr {
    height: 9px;
}
.grid tbody .tight {
    height: 8px;
}
.grid tbody .loose {
    height: 10px;
}
.grid td {
    position: relative;
    padding: 0 1px;
    overflow: hidden;
    white-space: nowrap;
}
.grid td div {
    display: flex;
    justify-content: center;
    overflow: hidden;
}
.grid .title-row {
    height: 14px;
}
.grid .title-row td {
    padding: 0 0 2px;
    background: #1f4e78;
    color: #fff;
    font-size: 8px;
    font-weight: 700;
    text-align: center;
}
.grid .note-row {
    height: 11px;
}
.note-row td {
    background: #f4f2f3;
    color: #555;
    font-style: italic;
    vertical-align: bottom;
}
.grid .head-row {
    height: 13px;
}
.grid .head-row td {
    padding: 0 0 1px;
    background: #1f4e78;
    color: #fff;
    font-family: Lato, sans-serif;
    font-weight: 700;
}
.item td {
    border-bottom: 1px solid #e6e6e6;
}
.item .caret {
    position: absolute;
    right: 3px;
    top: 3px;
    color: #777;
}
.grid .num, .grid .money, .grid .used, .grid .good {
    text-align: right;
}
.grid .money {
    color: #3a2fc9;
}
.tick::after {
    content: "";
    position: absolute;
    top: 0;
    right: 0;
    border: 1px solid #e0a640;
}
.grid .neg {
    color: #cc1446;
}
.grid .ok {
    background: #dff2dc;
    color: #2f5b35;
}
.grid .warn, .grid .used {
    background: #fff0cc;
    color: #5c4a14;
}
.total td {
    background: #dff3dc;
    border-top: 1px solid #2f6b50;
    border-bottom: 1px solid #1d5a4a;
    color: #1d3b2a;
    font-weight: 600;
}
.total .plain {
    background: #f1f3f8;
}
.grid .advice {
    background: #dcebf6;
    color: #44586a;
    font-style: italic;
}
.grid .section td {
    padding: 0 1px 1px;
    background: #1f4e78;
    color: #fff;
    font-family: Lato, sans-serif;
    font-weight: 700;
}
.savings td {
    border-bottom: 1px solid #e6e6e6;
}
.grid .savings td div {
    margin: 0 -1px;
    font-family: Lato, sans-serif;
}
.savings .good {
    background: #dff0d8;
    color: #3c6340;
}
.v-thumb {
    position: absolute;
    top: 12px;
    right: 0;
    width: 5px;
    height: 11px;
    background: #d4d6d9;
}
.v-arrows {
    position: absolute;
    right: 1px;
    bottom: 2px;
    display: flex;
    flex-direction: column;
    gap: 7px;
}
.v-arrows i {
    border: 2px solid transparent;
    border-top-color: #999;
    border-bottom: none;
}
.v-arrows i:first-child {
    transform: rotate(180deg);
}

/* Chart */
.chart {
    position: absolute;
    left: 603px;
    top: 45px;
    width: 199px;
    height: 69px;
    border: 1px solid #a5a5a5;
    background: #fff;
    font-size: 5px;
}
.chart-title {
    position: absolute;
    right: 28px;
    top: 3px;
    font-size: 8px;
    color: #777;
}
.axis {
    position: absolute;
    left: 0;
    top: 28px;
    transform: rotate(-90deg);
}
.legend {
    position: absolute;
    right: 3px;
    top: 12px;
    list-style: none;
}
.legend li {
    display: flex;
    align-items: center;
    gap: 3px;
    height: 10px;
    font-family: Roboto, sans-serif;
    font-style: italic;
}
.legend i {
    width: 5px;
    height: 5px;
}
.legend .blue {
    background: #4878a8;
}
.legend .red {
    background: #a82848;
}
.cell-cursor {
    position: absolute;
    left: 603px;
    top: 189px;
    width: 44px;
    height: 9px;
    border: 1px solid #6b74c9;
}

/* Scroll bar and sheet tabs */
.h-scroll {
    display: flex;
    align-items: center;
    height: 7px;
    padding-left: 20px;
    border-bottom: 1px solid #e0e0e0;
}
.h-thumb {
    width: 64%;
    height: 3px;
    background: #d6d8da;
}
.h-arrows {
    display: flex;
    gap: 6px;
    margin-left: auto;
    margin-right: 7px;
}
.h-arrows i {
    border: 2px solid transparent;
    border-left-color: #888;
    border-right: none;
}
.h-arrows i:first-child {
    transform: rotate(180deg);
}
.sheet-tabs {
    display: flex;
    align-items: center;
    height: 16px;
    padding: 0 9px 0 23px;
    background: #f9fbfd;
    font-family: Roboto, sans-serif;
    font-size: 7px;
}
.sheet-tabs button {
    display: flex;
    align-items: center;
}
.all-sheets {
    margin: 0 11px 0 10px;
}
.all-sheets .icon {
    stroke-width: 3;
}
.sheet-tab {
    height: 16px;
    padding: 0 5px;
    gap: 4px;
}
.sheet-tab.current {
    background: #e1e9f7;
    color: #1f4fae;
    font-weight: 700;
}
.count {
    width: 9px;
    height: 9px;
    margin-right: -1px;
    border-radius: 50%;
    background: #dde1e6;
    font-size: 5px;
    font-weight: 400;
    line-height: 9px;
    text-align: center;
    color: #444;
}
.current .count {
    background: #fff;
}
.side-toggle {
    margin-left: auto;
}

/* Taskbar */
.taskbar {
    display: flex;
    align-items: center;
    height: 21px;
    padding: 0 8px;
    background: #1c2021;
    color: #eee;
    font-family: "Open Sans", sans-serif;
    font-size: 5px;
    line-height: 7px;
}
.weather {
    display: flex;
    align-items: center;
    gap: 2px;
    width: 243px;
}
.weather svg {
    width: 12px;
    height: 12px;
}
.weather span {
    color: #bbb;
}
.start {
    width: 11px;
    height: 11px;
    margin-right: 6px;
}
.task-search {
    display: flex;
    align-items: center;
    gap: 4px;
    width: 96px;
    height: 14px;
    padding-left: 4px;
    border-radius: 7px;
    background: #393d3e;
    font-size: 6px;
}
.task-search input {
    flex: 1;
}
.apps {
    display: flex;
    justify-content: space-between;
    width: 225px;
    margin-left: 5px;
}
.apps svg {
    width: 12px;
    height: 12px;
}
.apps .running {
    overflow: visible;
}
.tray {
    display: flex;
    align-items: center;
    gap: 5px;
    margin-left: auto;
    text-align: center;
}
.onedrive {
    width: 9px;
    height: 9px;
}
.mic {
    color: #d08a60;
}
.lang {
    margin: 0 2px;
}
.clock {
    margin-left: 3px;
    text-align: right;
}

/* Right-click menu */
.context-menu {
    position: absolute;
    left: 619px;
    top: 143px;
    bottom: 21px;
    width: 142px;
    padding-top: 3px;
    background: #fff;
    box-shadow: 0 1px 4px rgba(0, 0, 0, 0.35);
}
.context-menu button {
    display: flex;
    align-items: center;
    gap: 3px;
    width: 100%;
    height: 14px;
    padding: 0 7px;
    color: #333;
}
.context-menu .hover {
    background: #e8e8e8;
}
.context-menu button:disabled {
    color: #aaa;
}
.context-menu hr {
    height: 1px;
    margin: 3px 0;
    border: none;
    background: #ddd;
}
.context-menu hr:nth-of-type(even) {
    margin-bottom: 4px;
}
.context-menu kbd {
    margin-left: auto;
    font-family: inherit;
    font-size: 6px;
    color: #999;
}
.arrow {
    margin-left: auto;
    border: 2px solid transparent;
    border-left: 3px solid #555;
    border-right: none;
}
.new {
    margin-left: auto;
    padding: 0 4px;
    border-radius: 4px;
    background: #146c2e;
    color: #fff;
    font-size: 5px;
    font-weight: 700;
    line-height: 7px;
}
.pointer {
    position: absolute;
    left: 617px;
    top: 315px;
    width: 6px;
    height: 9px;
}
```
